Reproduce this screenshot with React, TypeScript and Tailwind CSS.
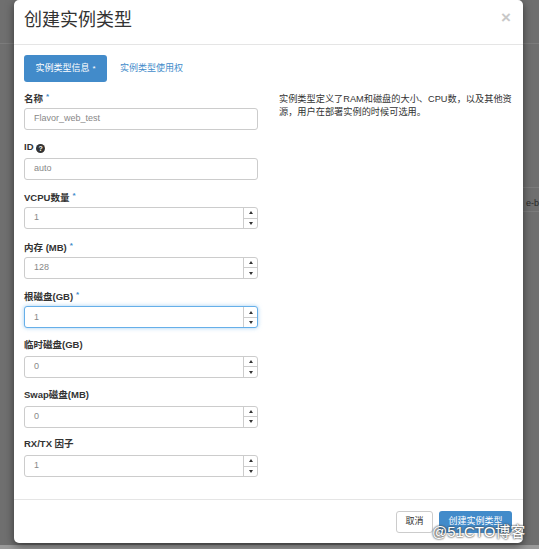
import type { ReactNode } from 'react';

const font = { fontFamily: '"Liberation Sans", "Noto Sans CJK SC", sans-serif' };

interface Field {
  label: ReactNode;
  value: string;
  required?: boolean;
  spinner?: boolean;
  focused?: boolean;
}

const fields: Field[] = [
  { label: '名称', value: 'Flavor_web_test', required: true },
  {
    label: (
      <>
        ID{' '}
        <span className="inline-flex h-[9px] w-[9px] items-center justify-center rounded-full bg-[#333] align-[-1px] text-[7px] font-bold leading-none text-white">
          ?
        </span>
      </>
    ),
    value: 'auto',
  },
  { label: 'VCPU数量', value: '1', required: true, spinner: true },
  { label: '内存 (MB)', value: '128', required: true, spinner: true },
  { label: '根磁盘(GB)', value: '1', required: true, spinner: true, focused: true },
  { label: '临时磁盘(GB)', value: '0', spinner: true },
  { label: 'Swap磁盘(MB)', value: '0', spinner: true },
  { label: 'RX/TX 因子', value: '1', spinner: true },
];

function Spinner() {
  return (
    <div className="flex w-[14px] flex-col border-l border-[#ccc]">
      <div className="flex flex-1 items-center justify-center border-b border-[#ccc]">
        <span className="h-0 w-0 border-x-[2.5px] border-b-[3px] border-x-transparent border-b-[#333]" />
      </div>
      <div className="flex flex-1 items-center justify-center">
        <span className="h-0 w-0 border-x-[2.5px] border-t-[3px] border-x-transparent border-t-[#333]" />
      </div>
    </div>
  );
}

function FormField({ f }: { f: Field }) {
  return (
    <div className="flex flex-col">
      <div className="h-[14px] text-[9.5px] font-bold leading-[14px] text-[#333]">
        {f.label}
        {f.required && <span className="ml-[3px] align-[3px] text-[8px] text-[#428bca]">*</span>}
      </div>
      <div
        className={`mt-[4px] flex h-[22px] rounded-[3px] border bg-white ${
          f.focused ? 'border-[#66afe9] shadow-[0_0_4px_rgba(102,175,233,0.6)]' : 'border-[#ccc]'
        }`}
      >
        <div className="flex flex-1 items-center pl-[9px] text-[9px] text-[#888]">{f.value}</div>
        {f.spinner && <Spinner />}
      </div>
    </div>
  );
}

export default function App() {
  return (
    <div className="relative h-[549px] w-[539px] overflow-hidden bg-[#6f6f6f]" style={font}>
      {/* page behind overlay */}
      <div className="absolute left-0 top-[43px] h-px w-full bg-[#7c7c7c]" />
      <div className="absolute right-0 top-[187px] h-px w-[20px] bg-[#7c7c7c]" />
      <div className="absolute right-0 top-[211px] h-px w-[20px] bg-[#7c7c7c]" />
      <div className="absolute right-0 top-[197px] text-[9px] text-[#2a2a2a]">e-b</div>
      <div className="absolute bottom-0 left-0 h-[4px] w-full bg-[#9a9a9a]" />

      <div className="relative ml-[14px] flex h-[543px] w-[509px] flex-col rounded-[5px] bg-white shadow-[0_3px_9px_rgba(0,0,0,0.5)]">
        <div className="flex h-[45px] items-center justify-between border-b border-[#e5e5e5] pl-[10px] pr-[12px]">
          <h1 className="pb-[3px] text-[18px] font-normal text-[#333]">创建实例类型</h1>
          <span className="pb-[10px] text-[17px] font-bold leading-none text-[#c8c8c8]">×</span>
        </div>

        <div className="flex-1 px-[10px] pt-[10px]">
          <div className="flex items-center gap-[13px]">
            <div className="flex h-[27px] w-[83px] items-center justify-center rounded-[3px] bg-[#428bca] text-[9px] text-white">
              实例类型信息<span className="ml-[3px] align-[3px] text-[8px]">*</span>
            </div>
            <div className="text-[9px] text-[#428bca]">实例类型使用权</div>
          </div>

          <div className="mt-[8px] flex">
            <div className="flex w-[234px] shrink-0 flex-col gap-[9.6px]">
              {fields.map((f, i) => (
                <FormField key={i} f={f} />
              ))}
            </div>
            <div className="ml-[21px] min-w-0 flex-1 whitespace-nowrap pt-[3px] text-[9.2px] leading-[13px] text-[#333]">
              实例类型定义了RAM和磁盘的大小、CPU数，以及其他资
              <br />
              源，用户在部署实例的时候可选用。
            </div>
          </div>
        </div>

        <div className="flex h-[44px] items-center justify-end gap-[6px] border-t border-[#e5e5e5] pr-[11px]">
          <div className="flex h-[22px] w-[37px] items-center justify-center rounded-[3px] border border-[#ccc] bg-white text-[9px] text-[#333]">
            取消
          </div>
          <div className="flex h-[22px] w-[73px] items-center justify-center rounded-[3px] bg-[#428bca] text-[9px] text-white">
            创建实例类型
          </div>
        </div>
      </div>

      <div className="absolute left-[432px] top-[521px] text-[15px] text-white [text-shadow:0_0_2px_#444,0_0_2px_#444]">
        @51CTO博客
      </div>
    </div>
  );
}
